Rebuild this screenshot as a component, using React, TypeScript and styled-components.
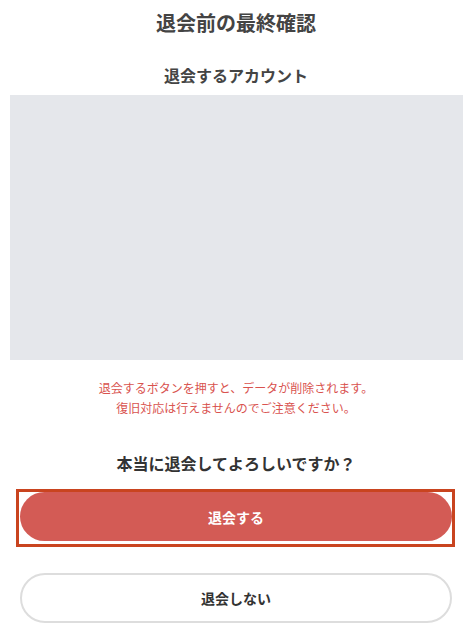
import React from "react"
import styled, { createGlobalStyle } from "styled-components"

const GlobalStyle = createGlobalStyle`
  body {
    margin: 0;
    background: #ffffff;
    font-family: "Noto Sans CJK JP", "Noto Sans", sans-serif;
    color: #444444;
  }
`

export default function App() {
    return (
        <>
            <GlobalStyle />
            <Page>
                <Title>退会前の最終確認</Title>
                <SubTitle>退会するアカウント</SubTitle>
                <AccountBox />
                <Warning>
                    退会するボタンを押すと、データが削除されます。
                    <br />
                    復旧対応は行えませんのでご注意ください。
                </Warning>
                <Question>本当に退会してよろしいですか？</Question>
                <FocusFrame>
                    <Button variant="danger">退会する</Button>
                </FocusFrame>
                <ButtonRow>
                    <Button variant="plain">退会しない</Button>
                </ButtonRow>
            </Page>
        </>
    )
}

const Page = styled.div`
    width: 472px;
    display: flex;
    flex-direction: column;
    align-items: stretch;
    padding-top: 9px;
`

const Title = styled.h1`
    margin: 0;
    font-size: 20px;
    line-height: 28px;
    font-weight: 700;
    text-align: center;
    color: #444444;
`

const SubTitle = styled.h2`
    margin: 26px 0 0;
    font-size: 16px;
    line-height: 24px;
    font-weight: 700;
    text-align: center;
    color: #444444;
`

const AccountBox = styled.div`
    margin: 8px 9px 0 10px;
    height: 265px;
    background: #e5e7eb;
`

const Warning = styled.p`
    margin: 18px 0 0;
    font-size: 12px;
    line-height: 20px;
    text-align: center;
    color: #d9534f;
`

const Question = styled.p`
    margin: 33px 0 0;
    font-size: 16px;
    line-height: 24px;
    font-weight: 700;
    text-align: center;
    color: #333333;
`

const FocusFrame = styled.div`
    margin: 14px 17px 0 16px;
    border: 3px solid #c9441f;
    padding: 0 0 3px 1px;
    display: flex;
`

const ButtonRow = styled.div`
    margin: 26px 20px 0 20px;
    display: flex;
`

const Button = styled.button<{ variant: "danger" | "plain" }>`
    flex: 1;
    height: ${p => (p.variant === "danger" ? "49px" : "50px")};
    border-radius: 25px;
    font-family: inherit;
    font-size: 14px;
    font-weight: 700;
    cursor: pointer;
    background: ${p => (p.variant === "danger" ? "#d35b55" : "#ffffff")};
    color: ${p => (p.variant === "danger" ? "#ffffff" : "#333333")};
    border: ${p => (p.variant === "danger" ? "none" : "2px solid #dddddd")};
`
